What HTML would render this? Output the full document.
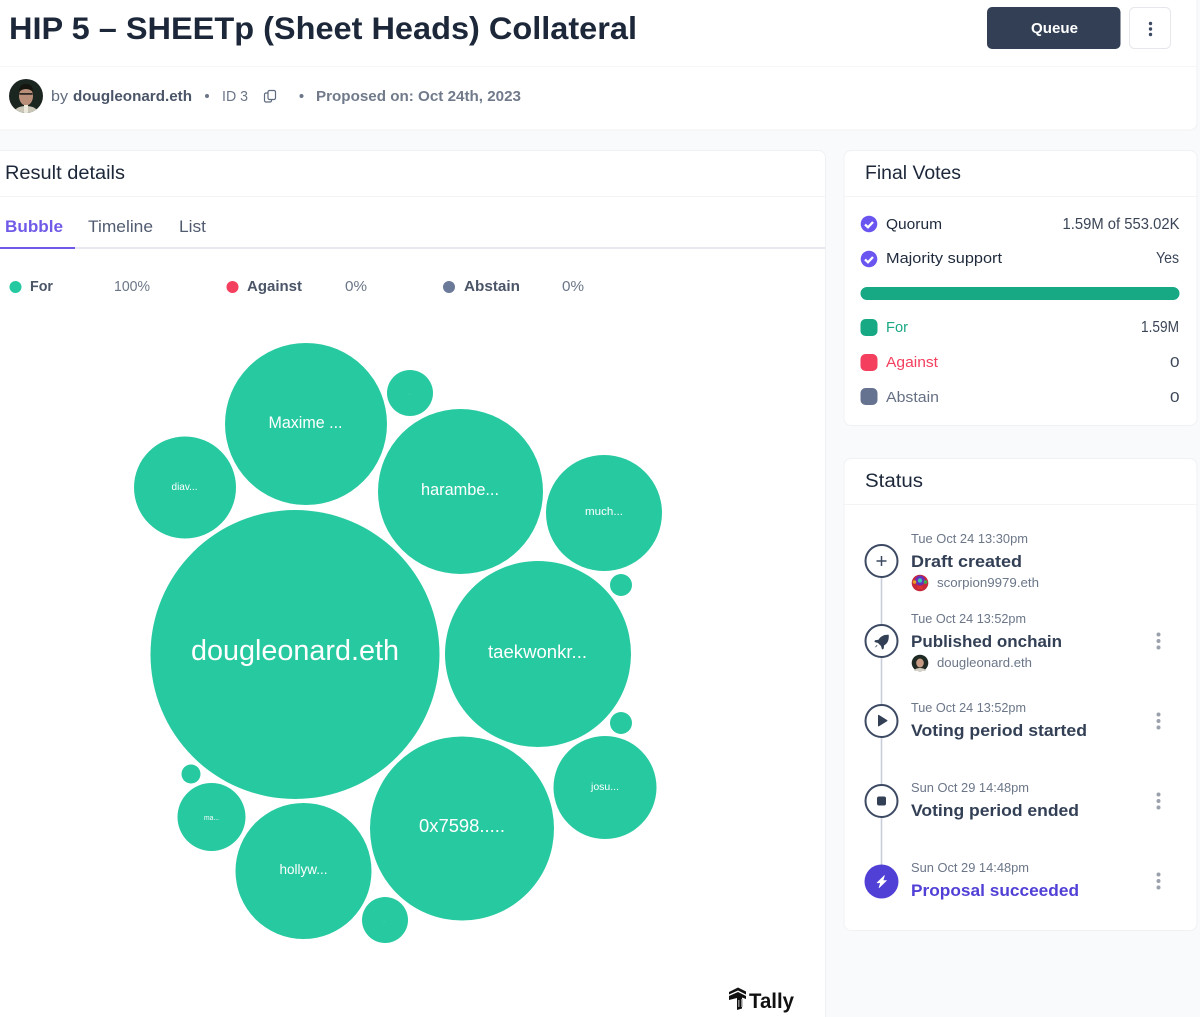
<!DOCTYPE html>
<html lang="en"><head><meta charset="utf-8"><title>HIP 5 Result</title>
<style>
html,body{margin:0;padding:0;background:#f9fafb;width:1200px;height:1017px;overflow:hidden}
svg{display:block}
text{font-family:"Liberation Sans",sans-serif}
</style></head><body>
<svg xmlns="http://www.w3.org/2000/svg" width="1200" height="1017" viewBox="0 0 1200 1017">
<rect width="1200" height="1017" fill="#f9fafb"/>
<!-- header -->
<rect x="-10" y="-10" width="1207" height="140" rx="7" fill="#fff" stroke="#f0f1f3"/>
<rect x="0" y="66" width="1197" height="1" fill="#f5f6f7"/>
<text x="9" y="39" font-size="31.500" font-weight="700" fill="#1c2739" textLength="628" lengthAdjust="spacingAndGlyphs">HIP 5 – SHEETp (Sheet Heads) Collateral</text>
<rect x="987" y="7" width="133.500" height="42" rx="5" fill="#323f55"/>
<text x="1031" y="33" font-size="15" font-weight="700" fill="#fff" textLength="47" lengthAdjust="spacingAndGlyphs">Queue</text>
<rect x="1129.500" y="7.500" width="41" height="41" rx="5" fill="#fff" stroke="#e5e7eb"/>
<circle cx="1150.500" cy="23.500" r="1.700" fill="#3d4a63"/><circle cx="1150.500" cy="29" r="1.700" fill="#3d4a63"/><circle cx="1150.500" cy="34.500" r="1.700" fill="#3d4a63"/>
<!-- avatar -->
<circle cx="26" cy="96" r="17" fill="#1c2620"/>
<clipPath id="av"><circle cx="26" cy="96" r="17"/></clipPath>
<g clip-path="url(#av)"><path d="M13 114q2-8 13-8t13 8z" fill="#c9c6b8"/><ellipse cx="26" cy="96" rx="7" ry="9.500" fill="#b98f7a"/><path d="M19 92q0-8 7-8t7 8q-3-3-7-3t-7 3z" fill="#15140f"/><rect x="19.500" y="93" width="13" height="1.800" fill="#2f2a26"/><rect x="24" y="105" width="4" height="9" fill="#ece8dc"/></g>
<text x="51" y="101" font-size="15" fill="#5f6b7e" textLength="17" lengthAdjust="spacingAndGlyphs">by</text>
<text x="73" y="101" font-size="15" font-weight="700" fill="#4b5568" textLength="119" lengthAdjust="spacingAndGlyphs">dougleonard.eth</text>
<circle cx="207" cy="96" r="2" fill="#6b7688"/>
<text x="222" y="101" font-size="15" fill="#6b7688" textLength="26" lengthAdjust="spacingAndGlyphs">ID 3</text>
<g fill="none" stroke="#5f6b7e" stroke-width="1.200"><rect x="268" y="90.500" width="7.500" height="9" rx="1.500"/><path d="M268 93h-2a1.500 1.500 0 0 0-1.500 1.500v6a1.500 1.500 0 0 0 1.500 1.500h4a1.500 1.500 0 0 0 1.500-1.500v-1"/></g>
<circle cx="301.500" cy="96" r="2" fill="#6b7688"/>
<text x="316" y="101" font-size="15" font-weight="700" fill="#707a8b" textLength="205" lengthAdjust="spacingAndGlyphs">Proposed on: Oct 24th, 2023</text>
<!-- result card -->
<rect x="-10" y="150.500" width="835.500" height="880" rx="7" fill="#fff" stroke="#f0f1f3"/>
<rect x="0" y="196" width="825" height="1" fill="#f3f4f6"/>
<text x="5" y="179" font-size="19" fill="#1c2739" textLength="120" lengthAdjust="spacingAndGlyphs">Result details</text>
<text x="5" y="232" font-size="17" font-weight="700" fill="#6f5be8" textLength="58" lengthAdjust="spacingAndGlyphs">Bubble</text>
<text x="88" y="232" font-size="17" fill="#515c70" textLength="65" lengthAdjust="spacingAndGlyphs">Timeline</text>
<text x="179" y="232" font-size="17" fill="#515c70" textLength="27" lengthAdjust="spacingAndGlyphs">List</text>
<rect x="0" y="247" width="825" height="2" fill="#e8e9f0"/>
<rect x="0" y="247" width="75" height="2" fill="#6f5be8"/>
<circle cx="15.500" cy="287" r="6" fill="#25c9a1"/>
<text x="30" y="291" font-size="15" font-weight="700" fill="#4b5568" textLength="23" lengthAdjust="spacingAndGlyphs">For</text>
<text x="114" y="291" font-size="15" fill="#6b7688" textLength="36" lengthAdjust="spacingAndGlyphs">100%</text>
<circle cx="232.500" cy="287" r="6" fill="#f43f5e"/>
<text x="247" y="291" font-size="15" font-weight="700" fill="#4b5568" textLength="55" lengthAdjust="spacingAndGlyphs">Against</text>
<text x="345" y="291" font-size="15" fill="#6b7688" textLength="22" lengthAdjust="spacingAndGlyphs">0%</text>
<circle cx="449" cy="287" r="6" fill="#6b7a99"/>
<text x="464" y="291" font-size="15" font-weight="700" fill="#4b5568" textLength="56" lengthAdjust="spacingAndGlyphs">Abstain</text>
<text x="562" y="291" font-size="15" fill="#6b7688" textLength="22" lengthAdjust="spacingAndGlyphs">0%</text>
<!-- bubbles -->
<g fill="#27c9a0">
<circle cx="306" cy="424" r="81"/><circle cx="410" cy="393" r="23"/><circle cx="460.500" cy="491.500" r="82.500"/>
<circle cx="185" cy="487.500" r="51"/><circle cx="604" cy="513" r="58"/><circle cx="295" cy="654.500" r="144.500"/>
<circle cx="538" cy="654" r="93"/><circle cx="621" cy="585" r="11"/><circle cx="621" cy="723" r="11"/>
<circle cx="605" cy="787.500" r="51.500"/><circle cx="462" cy="828.500" r="92"/><circle cx="191" cy="774" r="9.500"/>
<circle cx="211.500" cy="817" r="34"/><circle cx="303.500" cy="871" r="68"/><circle cx="385" cy="920" r="23"/>
</g>
<g fill="#fff">
<text x="268.500" y="428" font-size="16.500" textLength="74" lengthAdjust="spacingAndGlyphs">Maxime ...</text>
<text x="421" y="495" font-size="17" textLength="78" lengthAdjust="spacingAndGlyphs">harambe...</text>
<text x="171.500" y="490" font-size="10.500" textLength="26" lengthAdjust="spacingAndGlyphs">diav...</text>
<text x="585" y="515" font-size="11" textLength="38" lengthAdjust="spacingAndGlyphs">much...</text>
<text x="191" y="660" font-size="29" textLength="208" lengthAdjust="spacingAndGlyphs">dougleonard.eth</text>
<text x="488" y="658" font-size="18" textLength="99" lengthAdjust="spacingAndGlyphs">taekwonkr...</text>
<text x="591" y="790" font-size="10" textLength="28" lengthAdjust="spacingAndGlyphs">josu...</text>
<text x="419" y="832" font-size="18" textLength="86" lengthAdjust="spacingAndGlyphs">0x7598.....</text>
<text x="204" y="820" font-size="7" textLength="15" lengthAdjust="spacingAndGlyphs">ma...</text>
<text x="279.500" y="874" font-size="14" textLength="48" lengthAdjust="spacingAndGlyphs">hollyw...</text>
<text x="408" y="395" font-size="3" opacity=".6">...</text>
<text x="383" y="922" font-size="3" opacity=".6">...</text>
</g>
<!-- tally -->
<path d="M729 992l9-4.500 8 4v3l-8-4-9 4z M729 996l9-4 8 4v3l-4-1.500v11l-5 1.500v-12l-8 2z" fill="#111"/>
<rect x="738" y="1000" width="1.500" height="7" fill="#888"/><rect x="741" y="999" width="1.500" height="8" fill="#888"/>
<text x="749" y="1008" font-size="21" font-weight="700" fill="#111" textLength="45" lengthAdjust="spacingAndGlyphs">Tally</text>
<!-- final votes -->
<rect x="844" y="150.500" width="353" height="275" rx="7" fill="#fff" stroke="#f0f1f3"/>
<rect x="844.500" y="196" width="352" height="1" fill="#f3f4f6"/>
<text x="865" y="179" font-size="19" fill="#1c2739" textLength="96" lengthAdjust="spacingAndGlyphs">Final Votes</text>
<g><circle cx="869" cy="224" r="8.300" fill="#6a55f0"/><path d="M865 224.500l3 2.800 5-5.300" fill="none" stroke="#fff" stroke-width="2.300"/>
<circle cx="869" cy="259" r="8.300" fill="#6a55f0"/><path d="M865 259.500l3 2.800 5-5.300" fill="none" stroke="#fff" stroke-width="2.300"/></g>
<text x="886" y="229" font-size="15" fill="#1f2a3c" textLength="56" lengthAdjust="spacingAndGlyphs">Quorum</text>
<text x="1062.500" y="229" font-size="15.500" fill="#3a4557" textLength="117" lengthAdjust="spacingAndGlyphs">1.59M of 553.02K</text>
<text x="886" y="263" font-size="15" fill="#1f2a3c" textLength="116" lengthAdjust="spacingAndGlyphs">Majority support</text>
<text x="1156" y="263" font-size="16" fill="#3a4557" textLength="23" lengthAdjust="spacingAndGlyphs">Yes</text>
<rect x="860.500" y="287" width="319" height="13" rx="6.500" fill="#17a884"/>
<rect x="860.500" y="319" width="17" height="17" rx="5" fill="#17a884"/>
<rect x="860.500" y="354" width="17" height="17" rx="5" fill="#f43f5e"/>
<rect x="860.500" y="388" width="17" height="17" rx="5" fill="#667390"/>
<text x="886" y="332" font-size="15" fill="#17a884" textLength="22" lengthAdjust="spacingAndGlyphs">For</text>
<text x="886" y="367" font-size="15" fill="#f43f5e" textLength="52" lengthAdjust="spacingAndGlyphs">Against</text>
<text x="886" y="402" font-size="15" fill="#667085" textLength="53" lengthAdjust="spacingAndGlyphs">Abstain</text>
<text x="1141" y="332" font-size="16" fill="#3a4557" textLength="38" lengthAdjust="spacingAndGlyphs">1.59M</text>
<text x="1170" y="367" font-size="15" fill="#3a4557" textLength="9.500" lengthAdjust="spacingAndGlyphs">0</text>
<text x="1170" y="402" font-size="15" fill="#3a4557" textLength="9.500" lengthAdjust="spacingAndGlyphs">0</text>
<!-- status -->
<rect x="844" y="458.500" width="353" height="472" rx="7" fill="#fff" stroke="#f0f1f3"/>
<rect x="844.500" y="504" width="352" height="1" fill="#f3f4f6"/>
<text x="865" y="487" font-size="19" fill="#1c2739" textLength="58" lengthAdjust="spacingAndGlyphs">Status</text>
<rect x="880.700" y="577" width="1.600" height="290" fill="#c8cfdb"/>
<g fill="#fff" stroke="#3d4a63" stroke-width="2">
<circle cx="881.500" cy="561" r="16"/><circle cx="881.500" cy="641" r="16"/><circle cx="881.500" cy="721" r="16"/><circle cx="881.500" cy="801" r="16"/>
</g>
<circle cx="881.500" cy="881.500" r="17" fill="#5140d6"/>
<path d="M881.500 556v10M876.500 561h10" stroke="#3d4a63" stroke-width="1.500" fill="none"/>
<path d="M888.200 634.800c-4.200-.2-7.700 1.500-9.700 5l-3.500.5-.6 1.700 3.600 1 3 3 1 3.500 1.600-.6.500-3.500c3.700-2 5-5.500 4.600-10.600zM876.800 645l-2.300 2.800 3-1.900z" fill="#323f55"/>
<path d="M878 715.500q0-1 1-.5l8 5q1 .7 0 1.300l-8 5q-1 .5-1-.5z" fill="#323f55"/>
<rect x="877" y="796.500" width="9" height="9" rx="2" fill="#323f55"/>
<path d="M884.500 875.500l-7.500 7.300h3.500l-1.500 5 7.500-7.300h-3.500z" fill="#fff" stroke="#fff" stroke-width=".6" stroke-linejoin="round"/>
<g font-size="13" fill="#6b7688">
<text x="911" y="543" textLength="117" lengthAdjust="spacingAndGlyphs">Tue Oct 24 13:30pm</text>
<text x="911" y="623" textLength="115" lengthAdjust="spacingAndGlyphs">Tue Oct 24 13:52pm</text>
<text x="911" y="712" textLength="115" lengthAdjust="spacingAndGlyphs">Tue Oct 24 13:52pm</text>
<text x="911" y="792" textLength="118" lengthAdjust="spacingAndGlyphs">Sun Oct 29 14:48pm</text>
<text x="911" y="872" textLength="118" lengthAdjust="spacingAndGlyphs">Sun Oct 29 14:48pm</text>
<text x="937" y="587" textLength="102" lengthAdjust="spacingAndGlyphs">scorpion9979.eth</text>
<text x="937" y="667" textLength="95" lengthAdjust="spacingAndGlyphs">dougleonard.eth</text>
</g>
<g font-size="17" font-weight="700" fill="#323f55">
<text x="911" y="567" textLength="111" lengthAdjust="spacingAndGlyphs">Draft created</text>
<text x="911" y="647" textLength="151" lengthAdjust="spacingAndGlyphs">Published onchain</text>
<text x="911" y="736" textLength="176" lengthAdjust="spacingAndGlyphs">Voting period started</text>
<text x="911" y="816" textLength="168" lengthAdjust="spacingAndGlyphs">Voting period ended</text>
<text x="911" y="896" fill="#5140d6" textLength="168" lengthAdjust="spacingAndGlyphs">Proposal succeeded</text>
</g>
<!-- timeline avatars -->
<circle cx="920" cy="583" r="8.300" fill="#c62a3a"/><circle cx="920" cy="580.500" r="5" fill="#6a2fb8"/><circle cx="920" cy="580.500" r="2.200" fill="#35c8b5"/><circle cx="914.500" cy="582" r="1.800" fill="#e8a020"/><circle cx="925.500" cy="582" r="1.800" fill="#3bb04a"/><rect x="917.500" y="586" width="5" height="3" fill="#e03030"/>
<circle cx="920" cy="663" r="8.300" fill="#1f2a24"/><ellipse cx="920" cy="663" rx="3.800" ry="4.500" fill="#c79a84"/><path d="M914 671q1-3 6-3t6 3z" fill="#d5d2c5"/>
<!-- kebabs -->
<g fill="#9aa1ad">
<circle cx="1158.500" cy="634.500" r="2"/><circle cx="1158.500" cy="641" r="2"/><circle cx="1158.500" cy="647.500" r="2"/>
<circle cx="1158.500" cy="714.500" r="2"/><circle cx="1158.500" cy="721" r="2"/><circle cx="1158.500" cy="727.500" r="2"/>
<circle cx="1158.500" cy="794.500" r="2"/><circle cx="1158.500" cy="801" r="2"/><circle cx="1158.500" cy="807.500" r="2"/>
<circle cx="1158.500" cy="874.500" r="2"/><circle cx="1158.500" cy="881" r="2"/><circle cx="1158.500" cy="887.500" r="2"/>
</g>
</svg>
</body></html>
